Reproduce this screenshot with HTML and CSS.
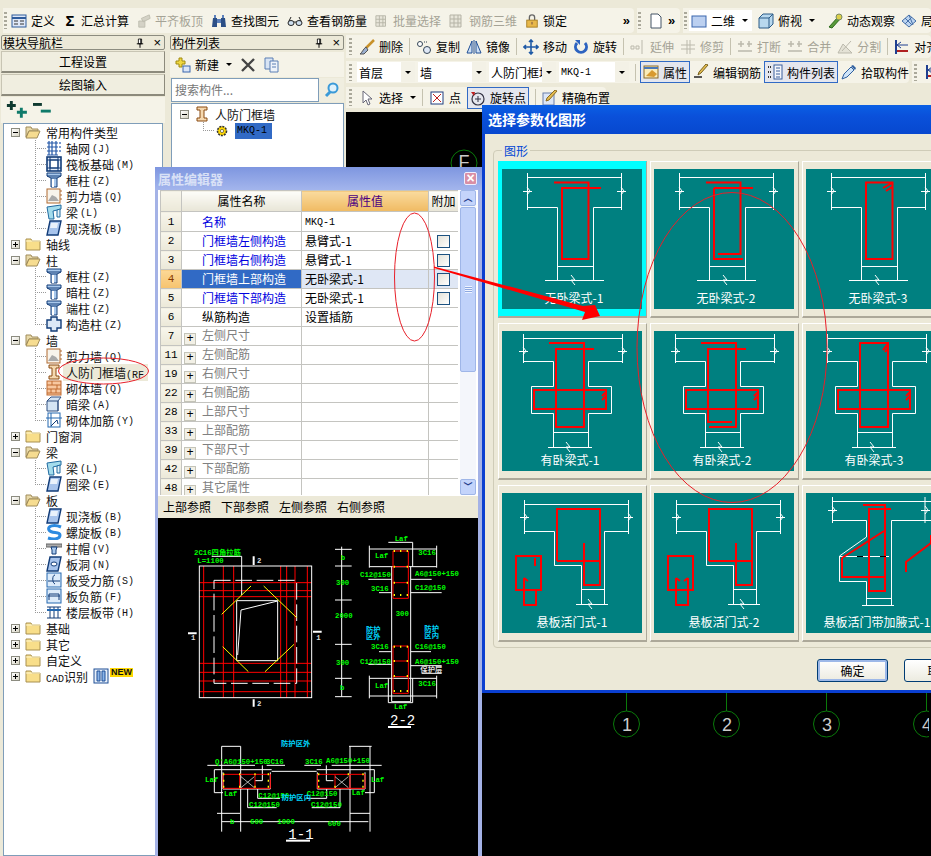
FILE: index.html
```html
<!DOCTYPE html>
<html>
<head>
  <meta charset="utf-8">
  <title>钢筋算量</title>
  <link rel="stylesheet" href="styles.css">
</head>
<body>
<!-- shared icons -->
<svg class="sprite">
  <symbol id="def" viewBox="0 0 16 16"><rect x="1" y="2" width="14" height="12" fill="#dfe8f8" stroke="#2f5c9c"/><path d="M1 5h14" stroke="#2f5c9c" stroke-width="2"/><path d="M3 8h4M3 11h4M9 8h4M9 11h4" stroke="#333"/></symbol>
  <symbol id="pin" viewBox="0 0 10 12"><path d="M3 1h4v6H3z" fill="#fff" stroke="#000"/><path d="M6 1v6M1 7h8M5 7v5" stroke="#000" stroke-width="1.2"/></symbol>
  <symbol id="graya" viewBox="0 0 16 16"><path d="M2 8h7v7H2zM5 5l9-4 1 4-8 4z" fill="#d4d2c6" stroke="#bdbbae"/></symbol>
  <symbol id="find" viewBox="0 0 16 16"><path d="M2 5h4v9H1zM10 5h4l1 9h-5z" fill="#2c4f86"/><path d="M3 2h2v3H3zM11 2h2v3h-2zM6 6h4v4H6z" fill="#5c80bb"/></symbol>
  <symbol id="glass" viewBox="0 0 16 16"><ellipse cx="4" cy="10" rx="3" ry="2.5" fill="#cfe0f0" stroke="#222"/><ellipse cx="12" cy="10" rx="3" ry="2.5" fill="#cfe0f0" stroke="#222"/><path d="M7 9h2M2 8l2-4M14 8l-2-4" stroke="#222" fill="none"/></symbol>
  <symbol id="grayb" viewBox="0 0 16 16"><path d="M1 2h11v12H1zM1 6h11M1 10h11M5 2v12M9 2v12" fill="#e8e6da" stroke="#b5b3a6"/></symbol>
  <symbol id="lock" viewBox="0 0 16 16"><path d="M5 7V4a3 3 0 0 1 6 0v3" fill="none" stroke="#666" stroke-width="1.5"/><rect x="2" y="7" width="12" height="8" fill="#e8b84a" stroke="#a47a1c"/><path d="M8 9v3" stroke="#644"/></symbol>
  <symbol id="page" viewBox="0 0 16 16"><path d="M3 1h7l3 3v11H3z" fill="#fff" stroke="#456"/></symbol>
  <symbol id="v2d" viewBox="0 0 16 16"><rect x="1" y="3" width="14" height="11" fill="#bcd0f0" stroke="#3a66ad"/></symbol>
  <symbol id="v3d" viewBox="0 0 16 16"><path d="M1 5l4-4h10v10l-4 4H1z" fill="#b8d8ee" stroke="#2a5a86"/><path d="M1 5h10v10M11 5l4-4" fill="none" stroke="#2a5a86"/></symbol>
  <symbol id="orbit" viewBox="0 0 16 16"><path d="M2 14l9-10 3 1-9 10z" fill="#5a9a3a" stroke="#2a6a1a"/><circle cx="12" cy="4" r="3" fill="#dcd04a" stroke="#786"/></symbol>
  <symbol id="part" viewBox="0 0 16 16"><path d="M1 8l7-6 7 6-7 6z" fill="#bcd4f0" stroke="#456fa8"/><path d="M4 5l7 7M8 2l4 10M4 11l7-7" stroke="#456fa8"/></symbol>
  <symbol id="del" viewBox="0 0 16 16"><path d="M15 1L7 9" stroke="#c8922a" stroke-width="2.5"/><path d="M7 8l2 3-4 4H1c2-1 3-5 6-7z" fill="#9bb0d0" stroke="#555"/></symbol>
  <symbol id="copy" viewBox="0 0 16 16"><circle cx="4" cy="5" r="2.5" fill="#fff" stroke="#345"/><circle cx="11" cy="11" r="3.5" fill="#dfe8f6" stroke="#345"/><path d="M8 3l4 0" stroke="#345" stroke-dasharray="1 1"/></symbol>
  <symbol id="mirror" viewBox="0 0 16 16"><path d="M1 14L6 2v12zM15 14L10 2v12z" fill="#cfe0f4" stroke="#1f4f96"/><path d="M8 1v14" stroke="#1f4f96"/></symbol>
  <symbol id="move" viewBox="0 0 16 16"><path d="M8 1v14M1 8h14M6 3l2-2 2 2M6 13l2 2 2-2M3 6L1 8l2 2M13 6l2 2-2 2" fill="none" stroke="#1f5aa6" stroke-width="1.6"/></symbol>
  <symbol id="rotate" viewBox="0 0 16 16"><path d="M4 4a5.5 5.5 0 1 0 8 0" fill="none" stroke="#2d63c0" stroke-width="3"/><path d="M2 1h5v5z" fill="#2d63c0"/></symbol>
  <symbol id="ext" viewBox="0 0 16 16"><path d="M1 7h3v3H1zM6 7h3v3H6zM12 1v14" fill="none" stroke="#bbb9ac"/></symbol>
  <symbol id="trim" viewBox="0 0 16 16"><path d="M1 6h14M1 10h14M7 1v14M10 1v14" fill="none" stroke="#bbb9ac"/></symbol>
  <symbol id="brk" viewBox="0 0 16 16"><path d="M1 5h6M10 5h5M1 12h14M4 2v6M12 2v6" fill="none" stroke="#bbb9ac" stroke-width="1.5"/></symbol>
  <symbol id="split" viewBox="0 0 16 16"><path d="M1 14h14L6 5zM14 2L5 12" fill="#e4e2d6" stroke="#bbb9ac"/></symbol>
  <symbol id="align" viewBox="0 0 16 16"><path d="M2 1v14" stroke="#1f3f90" stroke-width="2"/><path d="M3 6h11M7 3L3 6l4 3" fill="none" stroke="#1f3f90"/><path d="M3 12h11" stroke="#b02020" stroke-width="2"/></symbol>
  <symbol id="attr" viewBox="0 0 16 16"><rect x="1" y="2" width="14" height="12" fill="#fbecb8" stroke="#8a6a2a"/><path d="M3 12l6-6 5 4-3 3z" fill="#d89a30"/><path d="M1 4h14" stroke="#4a78b8" stroke-width="2"/></symbol>
  <symbol id="edit" viewBox="0 0 16 16"><path d="M15 1L8 9l-3 2 1-3 7-8z" fill="#e8c050" stroke="#776020"/><path d="M1 13h8" stroke="#222" stroke-width="1.5"/></symbol>
  <symbol id="list" viewBox="0 0 16 16"><rect x="7" y="1" width="8" height="14" fill="#f4f6fb" stroke="#3a5f9c"/><path d="M9 4h4M9 7h4M9 10h4M9 13h4" stroke="#3a5f9c"/><path d="M1 3h3M1 8h3M1 13h3" stroke="#333" stroke-width="2" stroke-dasharray="1 1"/></symbol>
  <symbol id="pick" viewBox="0 0 16 16"><path d="M1 15l2-5 7-7 3 3-7 7z" fill="#cfe4f8" stroke="#2f5f9f"/><path d="M10 2l2-1 3 3-1 2z" fill="#2f5f9f"/></symbol>
  <symbol id="cursor" viewBox="0 0 16 16"><path d="M4 1v12l3-3 2 5 2-1-2-5h4z" fill="#fff" stroke="#667"/></symbol>
  <symbol id="point" viewBox="0 0 16 16"><rect x="2" y="2" width="12" height="12" fill="#fff" stroke="#1f3f80"/><path d="M4 4l8 8M12 4l-8 8" stroke="#c02020"/></symbol>
  <symbol id="rotpt" viewBox="0 0 16 16"><circle cx="8" cy="9" r="6" fill="none" stroke="#334" stroke-width="1.2"/><path d="M8 6v6M5 9h6" stroke="#334"/><path d="M1 2l4 0-1 4z" fill="#c02020"/></symbol>
  <symbol id="exact" viewBox="0 0 16 16"><rect x="1" y="3" width="11" height="12" fill="#dce6f6" stroke="#6a7fa8"/><path d="M15 1L7 10l-3 1 1-3 8-8z" fill="#e4bc50" stroke="#8a6a20"/></symbol>
  <symbol id="newc" viewBox="0 0 16 16"><path d="M1 4h3V1h3v3h3v3H7v3H4V7H1z" fill="#f0d840" stroke="#a08a10"/><rect x="8" y="9" width="7" height="6" fill="#dbe6f7" stroke="#3a66ad"/></symbol>
  <symbol id="xdel" viewBox="0 0 16 16"><path d="M2 2l12 12M14 2L2 14" stroke="#444" stroke-width="2.4"/></symbol>
  <symbol id="docs" viewBox="0 0 16 16"><path d="M1 1h8v11H1z" fill="#d8e4f4" stroke="#5a7fb4"/><path d="M6 4h8v11H6z" fill="#eef3fa" stroke="#5a7fb4"/><path d="M8 7h4M8 10h4" stroke="#5a7fb4"/></symbol>
  <symbol id="srch" viewBox="0 0 16 16"><circle cx="9" cy="6" r="4.5" fill="#dff1fb" stroke="#3a9ad8" stroke-width="2"/><path d="M6 10l-4 4" stroke="#3a9ad8" stroke-width="3"/></symbol>
  <symbol id="plus2" viewBox="0 0 20 18"><path d="M4 1v8M0 5h8" stroke="#0f3a30" stroke-width="2.6"/><path d="M13 7v9M9 11h9" stroke="#0f7a6a" stroke-width="2.6"/></symbol>
  <symbol id="minus2" viewBox="0 0 20 18"><path d="M1 4h8" stroke="#0f3a30" stroke-width="2.6"/><path d="M8 10h9" stroke="#0f7a6a" stroke-width="2.6"/></symbol>
  <symbol id="door" viewBox="0 0 16 16"><path d="M3 1h10v3h-3v8h3v3H3v-3h3V4H3z" fill="#f4d8b0" stroke="#8a4a10"/></symbol>
  <symbol id="starc" viewBox="0 0 16 16"><circle cx="8" cy="8" r="4.5" fill="#ffd800" stroke="#333" stroke-width="1.6" stroke-dasharray="2 1"/><circle cx="8" cy="8" r="1.6" fill="#fff" stroke="#333" stroke-width=".6"/></symbol>

  <symbol id="fopen" viewBox="0 0 16 16"><path d="M1 3h5l1 2h6v2H4L1 13z" fill="#e8d9a8" stroke="#a08c5a"/><path d="M4 7h11l-3 7H1z" fill="#f6dc90" stroke="#a08c5a"/></symbol>
  <symbol id="fold" viewBox="0 0 16 16"><path d="M1 3h5l1 2h8v9H1z" fill="#f8de8a" stroke="#a89050"/><path d="M1 5h14" stroke="#fff6cc"/></symbol>
  <symbol id="grid" viewBox="0 0 16 16"><path d="M1 3h11M1 7h11M1 11h11M1 15h11M3 1v14M6 1v14M10 1v14" fill="none" stroke="#2458a8" stroke-width="1.2"/><path d="M13 2h2v2h-2zM13 6h2v2h-2zM13 10h2v2h-2z" fill="#7a9ad0"/></symbol>
  <symbol id="raft" viewBox="0 0 16 16"><rect x="1" y="1" width="14" height="14" fill="#e4ecf8" stroke="#123c78" stroke-width="1.6"/><rect x="4" y="4" width="8" height="8" fill="#fff" stroke="#123c78"/><path d="M1 4h14M1 12h14M4 1v14M12 1v14" stroke="#123c78"/></symbol>
  <symbol id="col" viewBox="0 0 16 16"><path d="M1 1h14v3l-4 2v9H5V6L1 4z" fill="#a8c8ec" stroke="#123c78"/><path d="M1 4h14M5 6h6" stroke="#123c78"/><path d="M6 7h2v8H6z" fill="#fff"/></symbol>
  <symbol id="shear" viewBox="0 0 16 16"><rect x="1" y="1" width="13" height="14" fill="#f8f4ec" stroke="#b06a30"/><path d="M2 13l4-6 4 2 3 4z" fill="#aaa"/><path d="M14 3h2M14 7h2M14 11h2" stroke="#b06a30"/></symbol>
  <symbol id="beam" viewBox="0 0 16 16"><path d="M1 3l14-2v4L7 7l1 8H3z" fill="#a4dcec" stroke="#1f6aa0"/><path d="M11 6l3-1v8h-3z" fill="#e0f0f8" stroke="#1f6aa0"/></symbol>
  <symbol id="slab" viewBox="0 0 16 16"><path d="M4 1h11l-3 14H1z" fill="#a8c4ec" stroke="#123c78" stroke-width="1.4"/><path d="M5 3h7l-1 5H4z" fill="#eaf2fb"/></symbol>
  <symbol id="constr" viewBox="0 0 16 16"><path d="M5 1h6v3h4v8h-4v3H5v-3H1V4h4z" fill="#dce8f6" stroke="#123c78" stroke-width="1.4"/></symbol>
  <symbol id="brick" viewBox="0 0 16 16"><rect x="1" y="1" width="14" height="14" fill="#f8c8a0" stroke="#c06a30"/><path d="M1 5h14M1 9h14M1 13h14M6 1v4M11 5v4M5 9v4M10 9v4" stroke="#c06a30"/></symbol>
  <symbol id="dbeam" viewBox="0 0 16 16"><path d="M1 5l4-4h10l-3 4v10H1z" fill="#d4e4f4" stroke="#2f4f80"/><path d="M1 5h11v10" fill="none" stroke="#2f4f80"/></symbol>
  <symbol id="wrebar" viewBox="0 0 16 16"><rect x="2" y="1" width="12" height="14" fill="#fff" stroke="#2468b0"/><path d="M0 6h16M5 1v14" stroke="#2468b0"/><path d="M5 14l6-6 1 4" fill="none" stroke="#123c78"/></symbol>
  <symbol id="spiral" viewBox="0 0 16 16"><path d="M15 3C8 0 1 2 3 6s11 1 11 5-6 5-12 3" fill="none" stroke="#2c8ae0" stroke-width="3"/></symbol>
  <symbol id="cap" viewBox="0 0 16 16"><path d="M0 4h16v3H0z" fill="#aaa" stroke="#666"/><path d="M5 7h6l-1 3v4H6v-4z" fill="#a8c8ec" stroke="#123c78"/></symbol>
  <symbol id="hole" viewBox="0 0 16 16"><path d="M4 1h11l-3 14H1z" fill="#a8c4ec" stroke="#123c78" stroke-width="1.4"/><ellipse cx="8" cy="8" rx="3" ry="2" fill="#fff" stroke="#123c78"/></symbol>
  <symbol id="srebar" viewBox="0 0 16 16"><rect x="1" y="1" width="14" height="14" fill="#dcebfa" stroke="#2468b0"/><path d="M2 9h12M9 3c-3 0-3 8 0 9" fill="none" stroke="#123c78"/></symbol>
  <symbol id="nrebar" viewBox="0 0 16 16"><rect x="1" y="1" width="14" height="14" fill="#dcebfa" stroke="#2468b0"/><path d="M3 12V6h10v6M2 8h12" fill="none" stroke="#123c78"/></symbol>
  <symbol id="band" viewBox="0 0 16 16"><path d="M1 3h14M1 14h14M4 3v11M8 3v11M12 3v11" stroke="#123c78"/><path d="M1 6h14" stroke="#2468b0" stroke-width="2"/></symbol>
  <symbol id="cadn" viewBox="0 0 16 16"><rect x="1" y="1" width="14" height="14" fill="#e8f0fa" stroke="#1f4f96"/><path d="M4 3h3v10H4zM9 3h3v10H9z" fill="#8ab4e8" stroke="#1f4f96"/></symbol>

  <g id="base-a" class="w"><path d="M25.5 4V41M119.5 4V41M25 8.5H119M25 38.5H55.5V111M91.5 111V38.5H119M55 97.5H91M43 111.5H102M21 22.5h9M25 18l3 4-3 4M21 22.5h9M115 22.5h9M119 18l3 4-3 4M69 106l4 5-4 0 4 5"/></g>
  <g id="base-b" class="w"><path d="M21.5 3V32M120.5 3V32M21 7.5H120M21 30.5H51.5V55.5H29.5V82.5H51.5V116M86.5 116V82.5H109.5V55.5H86.5V30.5H120M51 101.5H86M46 116.5H90M17 20.5h9M21 16l3 4-3 4M116 20.5h9M120 16l3 4-3 4M64 111l4 5-4 0 4 5"/></g>
  <g id="base-c" class="w"><path d="M22.5 7V41M126.5 7V41M22 11.5H126M22 38.5H52.5V72.5H79.5V111M102.5 111V38.5H126M79 96.5H102M74 111.5H106M18 24.5h9M22 20l3 4-3 4M122 24.5h9M126 20l3 4-3 4M86 106l4 5-4 0 4 5"/></g>
  <path id="cross" d="M32 59H104V78H32ZM104 61l-4 4M104 65l-4 4"/>
</svg>

<div class="app">
  <!-- top toolbar -->
  <div class="top-row">
    <div class="band band-main">
      <span class="grip"></span>
      <span class="tb"><svg class="ic"><use href="#def"/></svg>定义</span>
      <span class="tb"><span class="sigma">Σ</span>汇总计算</span>
      <span class="tb off"><svg class="ic ic14"><use href="#graya"/></svg>平齐板顶</span>
      <span class="tb"><svg class="ic"><use href="#find"/></svg>查找图元</span>
      <span class="tb"><svg class="ic"><use href="#glass"/></svg>查看钢筋量</span>
      <span class="tb off"><svg class="ic ic14"><use href="#grayb"/></svg>批量选择</span>
      <span class="tb off"><svg class="ic"><use href="#grayb"/></svg>钢筋三维</span>
      <span class="tb"><svg class="ic ic14"><use href="#lock"/></svg>锁定</span>
      <span class="more">»</span>
    </div>
    <div class="band band-page">
      <span class="grip"></span>
      <svg class="ic"><use href="#page"/></svg>
      <span class="more">»</span>
    </div>
    <div class="band band-view">
      <span class="grip"></span>
      <span class="tb view2d"><svg class="ic"><use href="#v2d"/></svg>二维<i class="arr"></i></span>
      <span class="tb"><svg class="ic"><use href="#v3d"/></svg>俯视<i class="arr"></i></span>
      <span class="tb tb-orbit"><svg class="ic"><use href="#orbit"/></svg>动态观察</span>
      <span class="tb"><svg class="ic"><use href="#part"/></svg>局部</span>
    </div>
  </div>

  <div class="main">
    <!-- module nav -->
    <div class="nav">
      <div class="ptitle">模块导航栏<span class="pbtns"><svg class="pin"><use href="#pin"/></svg><b>×</b></span></div>
      <div class="navbtn">工程设置</div>
      <div class="navbtn">绘图输入</div>
      <div class="treebar"><svg class="ic20"><use href="#plus2"/></svg><svg class="ic20"><use href="#minus2"/></svg></div>
      <div class="tree">
        <div class="node"><i class="exp minus"></i><svg class="ic"><use href="#fopen"/></svg><span class="lb">常用构件类型</span></div>
        <div class="kids">
          <div class="kid"><i class="conn"></i><svg class="ic"><use href="#grid"/></svg>轴网<span class="m">(J)</span></div>
          <div class="kid"><i class="conn"></i><svg class="ic"><use href="#raft"/></svg>筏板基础<span class="m">(M)</span></div>
          <div class="kid"><i class="conn"></i><svg class="ic"><use href="#col"/></svg>框柱<span class="m">(Z)</span></div>
          <div class="kid"><i class="conn"></i><svg class="ic"><use href="#shear"/></svg>剪力墙<span class="m">(Q)</span></div>
          <div class="kid"><i class="conn"></i><svg class="ic"><use href="#beam"/></svg>梁<span class="m">(L)</span></div>
          <div class="kid"><i class="conn"></i><svg class="ic"><use href="#slab"/></svg>现浇板<span class="m">(B)</span></div>
        </div>
        <div class="node"><i class="exp"></i><svg class="ic"><use href="#fold"/></svg><span class="lb">轴线</span></div>
        <div class="node"><i class="exp minus"></i><svg class="ic"><use href="#fopen"/></svg><span class="lb">柱</span></div>
        <div class="kids">
          <div class="kid"><i class="conn"></i><svg class="ic"><use href="#col"/></svg>框柱<span class="m">(Z)</span></div>
          <div class="kid"><i class="conn"></i><svg class="ic"><use href="#col"/></svg>暗柱<span class="m">(Z)</span></div>
          <div class="kid"><i class="conn"></i><svg class="ic"><use href="#col"/></svg>端柱<span class="m">(Z)</span></div>
          <div class="kid"><i class="conn"></i><svg class="ic"><use href="#constr"/></svg>构造柱<span class="m">(Z)</span></div>
        </div>
        <div class="node"><i class="exp minus"></i><svg class="ic"><use href="#fopen"/></svg><span class="lb">墙</span></div>
        <div class="kids">
          <div class="kid"><i class="conn"></i><svg class="ic"><use href="#shear"/></svg>剪力墙<span class="m">(Q)</span></div>
          <div class="kid"><i class="conn"></i><svg class="ic"><use href="#door"/></svg><span class="hit">人防门框墙<span class="m">(RF</span></span></div>
          <div class="kid"><i class="conn"></i><svg class="ic"><use href="#brick"/></svg>砌体墙<span class="m">(Q)</span></div>
          <div class="kid"><i class="conn"></i><svg class="ic"><use href="#dbeam"/></svg>暗梁<span class="m">(A)</span></div>
          <div class="kid"><i class="conn"></i><svg class="ic"><use href="#wrebar"/></svg>砌体加筋<span class="m">(Y)</span></div>
        </div>
        <div class="node"><i class="exp"></i><svg class="ic"><use href="#fold"/></svg><span class="lb">门窗洞</span></div>
        <div class="node"><i class="exp minus"></i><svg class="ic"><use href="#fopen"/></svg><span class="lb">梁</span></div>
        <div class="kids">
          <div class="kid"><i class="conn"></i><svg class="ic"><use href="#beam"/></svg>梁<span class="m">(L)</span></div>
          <div class="kid"><i class="conn"></i><svg class="ic"><use href="#slab"/></svg>圈梁<span class="m">(E)</span></div>
        </div>
        <div class="node"><i class="exp minus"></i><svg class="ic"><use href="#fopen"/></svg><span class="lb">板</span></div>
        <div class="kids">
          <div class="kid"><i class="conn"></i><svg class="ic"><use href="#slab"/></svg>现浇板<span class="m">(B)</span></div>
          <div class="kid"><i class="conn"></i><svg class="ic"><use href="#spiral"/></svg>螺旋板<span class="m">(B)</span></div>
          <div class="kid"><i class="conn"></i><svg class="ic"><use href="#cap"/></svg>柱帽<span class="m">(V)</span></div>
          <div class="kid"><i class="conn"></i><svg class="ic"><use href="#hole"/></svg>板洞<span class="m">(N)</span></div>
          <div class="kid"><i class="conn"></i><svg class="ic"><use href="#srebar"/></svg>板受力筋<span class="m">(S)</span></div>
          <div class="kid"><i class="conn"></i><svg class="ic"><use href="#nrebar"/></svg>板负筋<span class="m">(F)</span></div>
          <div class="kid"><i class="conn"></i><svg class="ic"><use href="#band"/></svg>楼层板带<span class="m">(H)</span></div>
        </div>
        <div class="node"><i class="exp"></i><svg class="ic"><use href="#fold"/></svg><span class="lb">基础</span></div>
        <div class="node"><i class="exp"></i><svg class="ic"><use href="#fold"/></svg><span class="lb">其它</span></div>
        <div class="node"><i class="exp"></i><svg class="ic"><use href="#fold"/></svg><span class="lb">自定义</span></div>
        <div class="node"><i class="exp"></i><svg class="ic"><use href="#fold"/></svg><span class="lb"><span class="m cad-m">CAD</span>识别</span><svg class="ic cadicon"><use href="#cadn"/></svg><span class="newtag">NEW</span></div>
      </div>
    </div>

    <!-- component list -->
    <div class="comp">
      <div class="ptitle">构件列表<span class="pbtns"><svg class="pin"><use href="#pin"/></svg><b>×</b></span></div>
      <div class="compbar">
        <span class="tb"><svg class="ic"><use href="#newc"/></svg>新建<i class="arr"></i></span>
        <svg class="ic"><use href="#xdel"/></svg>
        <svg class="ic"><use href="#docs"/></svg>
      </div>
      <div class="search"><div class="sbox">搜索构件...</div><div class="sbtn"><svg class="ic"><use href="#srch"/></svg></div></div>
      <div class="ctree">
        <div class="node cnode"><i class="exp minus"></i><svg class="ic"><use href="#door"/></svg><span class="lb">人防门框墙</span></div>
        <div class="kid ckid"><i class="conn"></i><svg class="ic"><use href="#starc"/></svg><span class="sel">MKQ-1</span></div>
      </div>
    </div>

    <!-- work area -->
    <div class="work">
      <div class="band row2">
        <span class="grip"></span>
        <span class="tb"><svg class="ic"><use href="#del"/></svg>删除</span><i class="sep"></i>
        <span class="tb"><svg class="ic"><use href="#copy"/></svg>复制</span>
        <span class="tb"><svg class="ic"><use href="#mirror"/></svg>镜像</span><i class="sep"></i>
        <span class="tb"><svg class="ic"><use href="#move"/></svg>移动</span>
        <span class="tb"><svg class="ic"><use href="#rotate"/></svg>旋转</span><i class="sep"></i>
        <span class="tb off"><svg class="ic"><use href="#ext"/></svg>延伸</span>
        <span class="tb off"><svg class="ic"><use href="#trim"/></svg>修剪</span><i class="sep"></i>
        <span class="tb off"><svg class="ic"><use href="#brk"/></svg>打断</span>
        <span class="tb off"><svg class="ic"><use href="#brk"/></svg>合并</span>
        <span class="tb off"><svg class="ic"><use href="#split"/></svg>分割</span><i class="sep"></i>
        <span class="tb"><svg class="ic"><use href="#align"/></svg>对齐</span>
      </div>
      <div class="row3">
        <div class="band row3-main">
          <span class="grip"></span>
          <span class="combo c1"><span class="ctext">首层</span><i class="arr"></i></span>
          <span class="combo c2"><span class="ctext">墙</span><i class="arr"></i></span>
          <span class="combo c3"><span class="ctext">人防门框墙</span><i class="arr"></i></span>
          <span class="combo c4"><span class="ctext mono">MKQ-1</span><i class="arr"></i></span>
          <i class="sep"></i>
          <span class="tb on"><svg class="ic"><use href="#attr"/></svg>属性</span>
          <span class="tb"><svg class="ic"><use href="#edit"/></svg>编辑钢筋</span>
          <span class="tb on"><svg class="ic"><use href="#list"/></svg>构件列表</span>
          <span class="tb"><svg class="ic"><use href="#pick"/></svg>拾取构件</span>
        </div>
        <div class="band row3-side"><span class="grip"></span><svg class="ic"><use href="#align"/></svg></div>
      </div>
      <div class="band row4">
        <span class="grip"></span>
        <span class="tb"><svg class="ic"><use href="#cursor"/></svg>选择<i class="arr"></i></span><i class="sep"></i>
        <span class="tb"><svg class="ic"><use href="#point"/></svg>点</span>
        <span class="tb on"><svg class="ic"><use href="#rotpt"/></svg>旋转点</span><i class="sep"></i>
        <span class="tb"><svg class="ic"><use href="#exact"/></svg>精确布置</span>
      </div>
      <div class="canvas">
        <svg class="axes" viewBox="348 112 583 744">
          <path class="ax" d="M466 176V190M628.5 693V711M728.5 693V711M828.500 693V711M928.500 693V711"/>
          <circle class="ax" cx="466" cy="163" r="13"/>
          <circle class="ax" cx="628.500" cy="724" r="13"/>
          <circle class="ax" cx="728.500" cy="724" r="13"/>
          <circle class="ax" cx="828.500" cy="724" r="13"/>
          <circle class="ax" cx="928.500" cy="724" r="13"/>
          <text class="axt" x="466" y="168">F</text>
          <text class="axt" x="629" y="731">1</text>
          <text class="axt" x="729" y="731">2</text>
          <text class="axt" x="829" y="731">3</text>
          <text class="axt" x="929" y="731">4</text>
        </svg>
      </div>
    </div>
  </div>

  <!-- property editor, floating window -->
  <div class="editor">
    <div class="etitle">属性编辑器<span class="eclose">×</span></div>
    <div class="egrid">
      <div class="tblwrap">
        <table class="ptable">
          <colgroup><col class="c-no"><col class="c-name"><col class="c-val"><col class="c-add"></colgroup>
          <tr class="head"><th class="no"></th><th>属性名称</th><th class="hval">属性值</th><th>附加</th></tr>
          <tr><td class="no">1</td><td class="nm blue">名称</td><td class="vl"><span class="mono">MKQ-1</span></td><td></td></tr>
          <tr><td class="no">2</td><td class="nm blue">门框墙左侧构造</td><td class="vl">悬臂式-1</td><td><i class="chk"></i></td></tr>
          <tr><td class="no">3</td><td class="nm blue">门框墙右侧构造</td><td class="vl">悬臂式-1</td><td><i class="chk"></i></td></tr>
          <tr class="cur"><td class="no">4</td><td class="nm">门框墙上部构造</td><td class="vl">无卧梁式-1</td><td><i class="chk"></i></td></tr>
          <tr><td class="no">5</td><td class="nm blue">门框墙下部构造</td><td class="vl">无卧梁式-1</td><td><i class="chk"></i></td></tr>
          <tr><td class="no">6</td><td class="nm">纵筋构造</td><td class="vl">设置插筋</td><td></td></tr>
          <tr class="grp"><td class="no">7</td><td class="nm"><i class="pl">+</i>左侧尺寸</td><td></td><td></td></tr>
          <tr class="grp"><td class="no">11</td><td class="nm"><i class="pl">+</i>左侧配筋</td><td></td><td></td></tr>
          <tr class="grp"><td class="no">19</td><td class="nm"><i class="pl">+</i>右侧尺寸</td><td></td><td></td></tr>
          <tr class="grp"><td class="no">22</td><td class="nm"><i class="pl">+</i>右侧配筋</td><td></td><td></td></tr>
          <tr class="grp"><td class="no">28</td><td class="nm"><i class="pl">+</i>上部尺寸</td><td></td><td></td></tr>
          <tr class="grp"><td class="no">33</td><td class="nm"><i class="pl">+</i>上部配筋</td><td></td><td></td></tr>
          <tr class="grp"><td class="no">39</td><td class="nm"><i class="pl">+</i>下部尺寸</td><td></td><td></td></tr>
          <tr class="grp"><td class="no">42</td><td class="nm"><i class="pl">+</i>下部配筋</td><td></td><td></td></tr>
          <tr class="grp"><td class="no">48</td><td class="nm"><i class="pl">+</i>其它属性</td><td></td><td></td></tr>
        </table>
      </div>
      <div class="vscroll">
        <div class="sb-btn">︿</div>
        <div class="sb-thumb"><span></span></div>
        <div class="sb-btn sb-down">﹀</div>
      </div>
    </div>
    <div class="etabs"><span>上部参照</span><span>下部参照</span><span>左侧参照</span><span>右侧参照</span></div>
    <div class="preview">
      <svg class="cad" viewBox="9 9 960 1014">
        <!-- plan -->
        <path class="c-r" d="M133 203H470M133 227H470M133 245H470M133 445H470M133 472H470M133 498H470M133 530H470M146 153V548M205 153V548M236 153V548M377 153V548M395 153V548M420 153V548M457 153V548"/>
        <rect class="c-w" x="133" y="153" width="337" height="395"/>
        <path class="c-w" stroke-dasharray="50 14" d="M177 196H425V505H177Z"/>
        <path class="c-w" d="M245 257H368V437H245ZM258 285L368 258M258 285L248 420M170 124H260V240"/>
        <path class="c-y" d="M288 213L200 298M326 213L425 308M203 395L280 470M417 388L330 470"/>
        <path class="c-wb" d="M296 124V150M296 553V575M99 355H125M474 350H500"/>
        <text class="c-g" x="117" y="120">2C16四角拉筋</text>
        <text class="c-g" x="127" y="144">L=1100</text>
        <text class="c-t" x="306" y="144">2</text>
        <text class="c-t" x="306" y="572">2</text>
        <text class="c-t" x="108" y="374">1</text>
        <text class="c-t" x="484" y="374">1</text>
        <!-- dims -->
        <path class="c-w" d="M560 95V545M540 103H590M540 153H590M540 255H590M540 388H590M540 490H590M540 545H590"/>
        <text class="c-g" x="557" y="135">b</text>
        <text class="c-g" x="543" y="209">300</text>
        <text class="c-g" x="540" y="308">2000</text>
        <text class="c-g" x="543" y="449">300</text>
        <text class="c-g" x="555" y="525">b</text>
        <!-- section 2-2 -->
        <path class="c-w" d="M643 92V158M845 92V158M643 102H845M643 155H845M700 82H773V155M710 155V560H767V155M643 482V550M845 482V550M643 490H845M643 543H845M700 490V563H773V490M640 193H710M767 193H830M672 233H710M767 233H860M672 410H710M767 410H828M640 448H710M767 452H860M800 475H860"/>
        <path class="c-r" d="M714 108H760V250H714ZM714 155H760M714 203H760M714 393H760V535H714ZM714 438H760M714 485H760"/>
        <path class="c-yd" d="M716 108h4M735 108h4M755 108h4M716 155h4M755 155h4M716 203h4M755 203h4M716 240h4M735 240h4M755 240h4M716 395h4M735 395h4M755 395h4M716 438h4M755 438h4M716 483h4M755 483h4M716 528h4M735 528h4M755 528h4"/>
        <text class="c-g" x="719" y="77">Laf</text>
        <text class="c-g" x="660" y="128">Laf</text>
        <text class="c-g" x="790" y="119">3C16</text>
        <text class="c-g" x="615" y="187">C12@150</text>
        <text class="c-g" x="780" y="184">A6@150+150</text>
        <text class="c-g" x="648" y="227">3C16</text>
        <text class="c-g" x="780" y="226">C12@150</text>
        <text class="c-g" x="722" y="302">300</text>
        <text class="c-c" x="633" y="350">防护</text>
        <text class="c-c" x="633" y="372">区外</text>
        <text class="c-c" x="808" y="347">防护</text>
        <text class="c-c" x="808" y="370">区内</text>
        <text class="c-g" x="648" y="403">3C16</text>
        <text class="c-g" x="780" y="403">C16@150</text>
        <text class="c-g" x="615" y="446">C12@150</text>
        <text class="c-g" x="780" y="448">A6@150+150</text>
        <text class="c-t" x="796" y="472">保护层</text>
        <text class="c-g" x="660" y="518">Laf</text>
        <text class="c-g" x="790" y="514">3C16</text>
        <text class="c-g" x="717" y="581">Laf</text>
        <text class="c-big" x="705" y="630">2-2</text>
        <path class="c-wb" d="M699 636H768"/>
        <!-- section 1-1 -->
        <path class="c-w" d="M157 751H300M335 751H390M448 751H498M530 751H680M200 694H257M582 694H650M200 694V950M257 694V950M585 694V950M645 694V950M178 764H350M350 769H485M485 764H658M178 764V833H204M658 764V833H630M204 772V822H346V772M487 772V822H630V772M322 751V797H300M514 751V797H535M278 822V878H365M555 822V878H470M308 822V850H375M515 822V850H455M186 895H255M585 895H645M200 920H640"/>
        <path class="c-r" d="M204 778H346V820H204ZM487 778H630V820H487ZM254 778V820M300 778V820M540 778V820M585 778V820"/>
        <path class="c-wt" d="M258 785L298 818M298 785L258 818M540 785L580 818M580 785L540 818"/>
        <path class="c-yd" d="M204 778h4M204 797h4M204 815h4M252 778h4M298 778h4M252 815h4M298 815h4M338 778h4M338 797h4M338 815h4M489 778h4M489 797h4M489 815h4M538 815h4M578 778h4M622 778h4M622 797h4M622 815h4"/>
        <text class="c-c" x="378" y="693">防护区外</text>
        <text class="c-g" x="180" y="746">Q'A6@150+150</text>
        <text class="c-g" x="333" y="746">3C16</text>
        <text class="c-g" x="450" y="746">3C16</text>
        <text class="c-g" x="513" y="743">A6@150+150</text>
        <text class="c-g" x="150" y="802">Laf</text>
        <text class="c-g" x="648" y="802">Laf</text>
        <text class="c-g" x="207" y="842">Laf</text>
        <text class="c-g" x="590" y="841">Laf</text>
        <text class="c-g" x="310" y="848">C12@150</text>
        <text class="c-g" x="455" y="844">C12@150</text>
        <text class="c-c" x="380" y="855">防护区内</text>
        <text class="c-g" x="282" y="875">C12@150</text>
        <text class="c-g" x="468" y="875">C12@150</text>
        <text class="c-g" x="225" y="928">b</text>
        <text class="c-g" x="285" y="928">600</text>
        <text class="c-g" x="367" y="928">1000</text>
        <text class="c-g" x="518" y="932">600</text>
        <text class="c-big" x="400" y="972">1-1</text>
        <path class="c-wb" d="M393 977H465"/>
      </svg>
    </div>
  </div>

  <!-- parametric shape dialog -->
  <div class="dialog">
    <div class="dtitle">选择参数化图形</div>
    <div class="dbody">
      <div class="group">
        <div class="gtitle">图形</div>
        <div class="shapes">
          <div class="cell active"><svg class="fig" viewBox="0 0 140 140"><use href="#base-a"/><path class="r" d="M52 13.500H86.500V90H60V19H99"/><text class="lbl" x="72" y="134">无卧梁式-1</text></svg></div>
          <div class="cell"><svg class="fig" viewBox="0 0 140 140"><use href="#base-a"/><path class="r" d="M52 13.500H86.500V85H64M60 19H99M60 19V90H89"/><text class="lbl" x="72" y="134">无卧梁式-2</text></svg></div>
          <div class="cell"><svg class="fig" viewBox="0 0 140 140"><use href="#base-a"/><path class="r" d="M60 13.500H86.500V90H60ZM86 14l-9 5M86 18l-6 4"/><text class="lbl" x="72" y="134">无卧梁式-3</text></svg></div>

          <div class="cell"><svg class="fig" viewBox="0 0 140 140"><use href="#base-b"/><path class="r" d="M47 12H82V96H54V18H92"/><use class="r" href="#cross"/><text class="lbl" x="68" y="134">有卧梁式-1</text></svg></div>
          <div class="cell"><svg class="fig" viewBox="0 0 140 140"><use href="#base-b"/><path class="r" d="M47 12H82V96H55M78 91H54V18H92"/><use class="r" href="#cross"/><text class="lbl" x="68" y="134">有卧梁式-2</text></svg></div>
          <div class="cell"><svg class="fig" viewBox="0 0 140 140"><use href="#base-b"/><path class="r" d="M54 12H82V96H54ZM82 13l-5 6M82 17l-3 4"/><use class="r" href="#cross"/><text class="lbl" x="68" y="134">有卧梁式-3</text></svg></div>

          <div class="cell"><svg class="fig" viewBox="0 0 140 140"><use href="#base-c"/><path class="r" d="M55 68V16H98V92H82V50M55 68H98M14 63H39V97H14ZM33 65v8M22 85V112H34V97M22 85l4 3"/><text class="lbl" x="70" y="134">悬板活门式-1</text></svg></div>
          <div class="cell"><svg class="fig" viewBox="0 0 140 140"><use href="#base-c"/><path class="r" d="M55 68V16H98V92H82V50M55 68H98M14 63H39V97H14ZM22 85V112H34V85M22 85l4 3M34 85l-4 3"/><text class="lbl" x="70" y="134">悬板活门式-2</text></svg></div>
          <div class="cell"><svg class="fig" viewBox="0 0 140 140"><path class="w" d="M26.500 4V30M26 8.500H135M26 27.500H60.500V44L33.500 63V88.500H60.500V112M85.500 112V27.500H135M34 63.500H83M60 105.500H85M56 112.500H88M22 17.500h9M26 13l3 4-3 4M119 4V30M115 17.500h9M119 13l3 4-3 4"/><path class="r" d="M57 12H79V98H63V16H85M36 65L78 38M36 65V84H79M100 79V69L125 50V42"/><path class="kd" d="M51 63.500h6M74 63.500h6"/><text class="lbl" x="71" y="134">悬板活门带加腋式-1</text></svg></div>
        </div>
      </div>
      <div class="dbtns"><span class="dbtn focus">确定</span><span class="dbtn">取消</span></div>
    </div>
  </div>

  <!-- hand drawn marks on the shot -->
  <svg class="marks" viewBox="0 0 931 856">
    <ellipse class="mk" cx="103.5" cy="371" rx="45" ry="13"/>
    <ellipse class="mk" cx="414.5" cy="277" rx="20" ry="64"/>
    <ellipse class="mk" cx="732" cy="347.5" rx="95" ry="155"/>
    <path class="mk-arrow" d="M434 266.500L583 306L595 305L600 316L582 320L585 312L434 268Z"/>
  </svg>
</div>
</body>
</html>
```

FILE: styles.css
```css
* {
  box-sizing: border-box;
}
body {
  margin: 0;
  background: #ece9d8;
  font-family: "Noto Sans CJK SC", "Liberation Sans", sans-serif;
  font-size: 12px;
  color: #000;
}
.sprite {
  position: absolute;
  width: 0;
  height: 0;
}
.app {
  position: relative;
  display: flex;
  flex-direction: column;
  width: 931px;
  height: 856px;
  padding-top: 8px;
  overflow: hidden;
  background: #ece9d8;
}
.m, .mono {
  font-family: "Liberation Mono", monospace;
  font-size: 10px;
}
.m {
  margin: 2px 0 0 2px;
}
.hit .m, .cad-m {
  margin: 0;
}

/* toolbars */
.top-row {
  display: flex;
  gap: 3px;
  height: 27px;
  flex-shrink: 0;
}
.band {
  display: flex;
  align-items: center;
  gap: 8px;
  height: 25px;
  background: #f5f3e8;
  border-radius: 0 4px 4px 0;
  white-space: nowrap;
}
.band-main {
  width: 631px;
  margin-left: 3px;
  padding-left: 1px;
}
.band-page {
  width: 43px;
  gap: 4px;
  padding-left: 1px;
}
.band-view {
  flex: 1;
  gap: 6px;
  overflow: hidden;
  padding-left: 1px;
}
.grip {
  flex-shrink: 0;
  width: 3px;
  height: 17px;
  margin-right: -4px;
  background: repeating-linear-gradient(#aaa89a 0 2px, transparent 2px 4px);
}
.band-page .grip {
  margin-right: 3px;
}
.band-view .grip {
  margin-right: -4px;
}
.tb {
  display: inline-flex;
  align-items: center;
  gap: 4px;
  height: 22px;
  flex-shrink: 0;
}
.tb.off {
  color: #a5a396;
}
.tb.on {
  padding: 0 2px;
  border: 1px solid #316ac5;
  background: #e4e6ee;
}
.ic {
  width: 16px;
  height: 16px;
  flex-shrink: 0;
}
.ic14 {
  width: 14px;
}
.ic20 {
  width: 24px;
  height: 20px;
}
.sigma {
  width: 14px;
  font-family: "Liberation Sans", sans-serif;
  font-size: 15px;
  font-weight: bold;
  text-align: center;
}
.more {
  margin-left: auto;
  margin-right: 4px;
  font-family: "Liberation Sans", sans-serif;
  font-weight: bold;
  font-size: 13px;
}
.band-page .more {
  margin-left: 0;
  margin-right: 0;
}
.arr {
  display: inline-block;
  width: 0;
  height: 0;
  margin-left: 3px;
  border: 3px solid transparent;
  border-top: 3px solid #000;
  border-bottom: 0;
}
.view2d {
  height: 21px;
  padding: 0 4px 0 2px;
  background: #fff;
}
.tb-orbit {
  margin-left: 6px;
}
.sep {
  flex-shrink: 0;
  width: 1px;
  height: 17px;
  background: #c5c2b0;
}

/* panels */
.main {
  display: flex;
  flex: 1;
  min-height: 0;
}
.ptitle {
  display: flex;
  justify-content: space-between;
  align-items: center;
  height: 15px;
  padding-left: 1px;
  border: 1px solid #8c8c80;
  border-radius: 2px;
  background: #ece9d8;
  line-height: 13px;
}
.pbtns {
  display: flex;
  align-items: center;
  gap: 9px;
  padding-right: 3px;
  font-weight: normal;
}
.pbtns b {
  font-family: "Liberation Sans", sans-serif;
  font-size: 13px;
  font-weight: normal;
}
.pin {
  width: 8px;
  height: 10px;
}
.nav {
  display: flex;
  flex-direction: column;
  width: 164px;
  margin-left: 1px;
}
.navbtn {
  height: 22px;
  margin-top: 1px;
  border: 1px solid #c8c5b4;
  border-right-color: #8c8a7c;
  border-bottom: 2px solid #8c8a7c;
  background: #f0eee0;
  line-height: 19px;
  text-align: center;
}
.treebar {
  display: flex;
  align-items: center;
  gap: 1px;
  height: 26px;
  margin-top: 1px;
  padding-left: 5px;
  background: #f5f3e8;
}
.tree {
  flex: 1;
  margin: 0 2px;
  border: 1px solid #7f9db9;
  background: #fff;
}
.node, .kid {
  display: flex;
  align-items: center;
  height: 16px;
  white-space: nowrap;
  color: #111;
}
.node {
  padding-left: 7px;
}
.node .ic {
  margin-left: 5px;
}
.node .lb {
  margin-left: 5px;
}
.exp {
  position: relative;
  flex-shrink: 0;
  width: 9px;
  height: 9px;
  border: 1px solid #8c8c80;
  background: linear-gradient(135deg, #fff, #d8d5c4);
}
.exp::before {
  content: "";
  position: absolute;
  left: 1px;
  top: 3px;
  width: 5px;
  height: 1px;
  background: #000;
}
.exp:not(.minus)::after {
  content: "";
  position: absolute;
  left: 3px;
  top: 1px;
  width: 1px;
  height: 5px;
  background: #000;
}
.kids {
  padding-left: 31px;
}
.kid .ic {
  margin-right: 4px;
}
.conn {
  flex-shrink: 0;
  width: 11px;
  height: 16px;
  background:
    repeating-linear-gradient(to right, #999 0 1px, transparent 1px 2px) 0 8px / 11px 1px no-repeat,
    repeating-linear-gradient(#999 0 1px, transparent 1px 2px) 0 0 / 1px 100% no-repeat;
}
.kid:last-child .conn {
  background-size: 11px 1px, 1px 9px;
}
.hit {
  margin-left: -3px;
  padding: 0 4px 0 3px;
  background: #ece9d8;
}
.cadicon {
  margin-left: 6px;
}
.newtag {
  align-self: flex-start;
  margin-left: 1px;
  padding: 0 1px;
  background: #ffd800;
  font-family: "Liberation Sans", sans-serif;
  font-size: 9px;
  font-weight: bold;
  line-height: 9px;
}
.comp {
  display: flex;
  flex-direction: column;
  width: 174px;
  margin-left: 5px;
}
.compbar {
  display: flex;
  align-items: center;
  gap: 8px;
  height: 25px;
  margin-top: 2px;
  padding-left: 5px;
  background: #f5f3e8;
}
.search {
  display: flex;
  height: 24px;
  margin-top: 1px;
}
.sbox {
  width: 148px;
  margin-left: 1px;
  padding-left: 3px;
  border: 1px solid #7f9db9;
  background: #fff;
  color: #777;
  font-size: 12px;
  line-height: 21px;
}
.sbtn {
  flex: 1;
  display: flex;
  align-items: center;
  justify-content: center;
  background: #f0eee0;
}
.ctree {
  flex: 1;
  margin-top: 1px;
  margin-left: 1px;
  padding-top: 2px;
  border: 1px solid #7f9db9;
  background: #fff;
}
.cnode {
  padding-left: 8px;
}
.ckid {
  height: 18px;
  padding-left: 31px;
}
.ckid .ic {
  margin-right: 5px;
}
.ckid .conn {
  height: 18px;
  background-size: 11px 1px, 1px 9px;
}
.sel {
  width: 37px;
  height: 16px;
  padding-left: 2px;
  background: #316ac5;
  color: #000;
  font-family: "Liberation Mono", monospace;
  font-size: 10px;
  line-height: 16px;
}
.work {
  display: flex;
  flex-direction: column;
  flex: 1;
  margin-left: 2px;
  min-width: 0;
}
.row2 {
  flex-shrink: 0;
  height: 23px;
  gap: 6px;
  margin-bottom: 3px;
  padding-left: 3px;
  overflow: hidden;
}
.row2 .grip {
  margin-right: 1px;
}
.row3 {
  display: flex;
  flex-shrink: 0;
  gap: 3px;
  height: 22px;
  margin-bottom: 4px;
}
.row3-main {
  width: 568px;
  height: 22px;
  gap: 3px;
  padding-left: 3px;
}
.row3-main .grip {
  margin-right: 2px;
}
.row3-main .sep {
  margin: 0 1px 0 3px;
}
.row3-side {
  flex: 1;
  height: 22px;
  padding-left: 2px;
}
.row3-side .grip {
  margin-right: 0;
}
.combo {
  display: inline-flex;
  align-items: center;
  flex-shrink: 0;
  height: 20px;
  background: #fff;
}
.ctext {
  flex: 1;
  min-width: 0;
  padding-left: 2px;
  overflow: hidden;
  white-space: nowrap;
}
.combo .arr {
  flex-shrink: 0;
  width: 14px;
  height: 100%;
  margin: 0;
  border: 0;
  background: #f3f1e6;
  position: relative;
}
.combo .arr::after {
  content: "";
  position: absolute;
  left: 4px;
  top: 9px;
  border: 3px solid transparent;
  border-top-color: #000;
  border-bottom: 0;
}
.c1 { width: 58px; }
.c2 { width: 68px; }
.c3 { width: 67px; }
.c4 { width: 70px; }
.row4 {
  flex-shrink: 0;
  width: 260px;
  height: 21px;
  gap: 6px;
  margin-bottom: 4px;
  padding-left: 3px;
}
.row4 .grip {
  margin-right: 1px;
}
.canvas {
  position: relative;
  flex: 1;
  background: #000;
}
.axes {
  position: absolute;
  left: 0;
  top: 0;
  width: 583px;
  height: 744px;
}
.ax {
  fill: none;
  stroke: #0a7a0a;
}
.axt {
  fill: #ccc;
  font-family: "Liberation Sans", sans-serif;
  font-size: 18px;
  text-anchor: middle;
}

/* property editor */
.editor {
  position: absolute;
  left: 155px;
  top: 167px;
  display: flex;
  flex-direction: column;
  width: 327px;
  height: 689px;
  border: solid #a4b2e6;
  border-width: 0 4px 0 3px;
  background: #ece9d8;
}
.etitle {
  display: flex;
  align-items: center;
  justify-content: space-between;
  height: 23px;
  margin: 0 -4px 0 -3px;
  padding: 0 5px 0 3px;
  background: linear-gradient(#7e96e0, #a3b5ec);
  color: #d9e1f6;
  font-size: 13px;
  font-weight: bold;
}
.eclose {
  width: 13px;
  height: 13px;
  border: 1px solid #eef;
  border-radius: 2px;
  background: #d98fa5;
  color: #fff;
  font-family: "Liberation Sans", sans-serif;
  font-size: 14px;
  font-weight: bold;
  line-height: 10px;
  text-align: center;
}
.egrid {
  display: flex;
  gap: 2px;
  height: 305px;
  padding-left: 2px;
  background: #fff;
}
.tblwrap {
  width: 298px;
  height: 305px;
  overflow: hidden;
}
.ptable {
  width: 298px;
  table-layout: fixed;
  border-collapse: collapse;
}
.c-no { width: 21px; }
.c-name { width: 120px; }
.c-val { width: 127px; }
.c-add { width: 30px; }
.ptable th, .ptable td {
  height: 19px;
  padding: 0;
  border: 1px solid #c4c4c0;
  overflow: hidden;
  white-space: nowrap;
  line-height: 16px;
}
.ptable th {
  height: 21px;
  background: linear-gradient(#fdfdfa, #e8e5d6);
  font-weight: normal;
}
.ptable .hval {
  background: linear-gradient(#fadb9e, #f0ba62);
  color: #4b0082;
}
.ptable .no {
  background: linear-gradient(#f8f6ec, #ebe8d8);
  font-family: "Liberation Mono", monospace;
  font-size: 11px;
  text-align: center;
}
.ptable .nm {
  padding-left: 20px;
}
.ptable .vl {
  padding-left: 3px;
}
.blue {
  color: #0000e0;
}
.cur .nm {
  background: #316ac5;
  color: #fff;
}
.ptable .cur .no {
  background: linear-gradient(#fcd896, #f6c36e);
  color: #8a3b00;
}
.cur .vl, .cur td:last-child {
  background: #dfe7f5;
}
.chk {
  display: block;
  width: 13px;
  height: 13px;
  margin: 0 auto;
  border: 1px solid #1c5180;
  background: linear-gradient(135deg, #e4e2d8, #fff);
}
.grp .nm {
  padding-left: 2px;
  color: #808080;
}
.pl {
  display: inline-block;
  width: 12px;
  height: 12px;
  margin-right: 6px;
  border: 1px solid #c4c4b8;
  background: #f2f0e6;
  color: #000;
  font-family: "Liberation Mono", monospace;
  font-size: 12px;
  font-style: normal;
  line-height: 10px;
  text-align: center;
  vertical-align: -2px;
}
.vscroll {
  display: flex;
  flex-direction: column;
  width: 16px;
  background: #f4f6fb;
}
.sb-btn {
  height: 16px;
  border: 1px solid #9fb6e8;
  border-radius: 2px;
  background: #c4d4fb;
  color: #26408c;
  font-size: 9px;
  font-weight: bold;
  line-height: 14px;
  text-align: center;
}
.sb-thumb {
  display: flex;
  align-items: center;
  justify-content: center;
  height: 165px;
  margin-top: 1px;
  border: 1px solid #9fb6e8;
  border-radius: 2px;
  background: #c0d2fa;
}
.sb-thumb span {
  width: 7px;
  height: 7px;
  background: repeating-linear-gradient(#eef3ff 0 1px, #8da8e0 1px 2px);
}
.sb-down {
  margin-top: auto;
}
.etabs {
  display: flex;
  gap: 10px;
  flex-shrink: 0;
  height: 23px;
  padding-left: 5px;
  background: #ece9d8;
  border-top: 1px solid #fff;
  line-height: 21px;
}
.preview {
  flex: 1;
  min-height: 0;
  background: #000;
  overflow: hidden;
}
.cad {
  display: block;
  width: 320px;
  height: 338px;
}
.cad path, .cad rect {
  fill: none;
}
.c-w { stroke: #fff; stroke-width: 3; }
.c-wt { stroke: #fff; stroke-width: 2; }
.c-wb { stroke: #fff; stroke-width: 6; }
.c-r { stroke: #f00; stroke-width: 3; }
.c-y { stroke: #ff0; stroke-width: 3; }
.c-yd { stroke: #ff0; stroke-width: 6; }
.cad text {
  font-family: "Liberation Mono", "Noto Sans CJK SC", monospace;
  font-size: 22px;
  font-weight: bold;
}
.cad .c-g { fill: #0f0; }
.cad .c-c { fill: #00d8ff; }
.cad .c-t { fill: #ddd; }
.cad .c-big {
  fill: #fff;
  font-size: 42px;
  font-weight: normal;
}

/* dialog */
.dialog {
  position: absolute;
  left: 482px;
  top: 105px;
  width: 620px;
  height: 588px;
  border: solid #0a3fd0;
  border-width: 0 3px 3px;
  border-radius: 4px 4px 0 0;
  background: #ece9d8;
}
.dtitle {
  height: 29px;
  margin: 0 -3px;
  padding-left: 6px;
  background: linear-gradient(#0a5fe4, #0a50da 40%, #0748cf);
  color: #fff;
  font-size: 14px;
  font-weight: bold;
  line-height: 29px;
}
.dbody {
  padding: 16px 0 0 8px;
}
.group {
  padding: 0 0 5px 4px;
  border: 1px solid #cfccb8;
  border-radius: 4px;
}
.gtitle {
  width: fit-content;
  margin: -9px 0 0 4px;
  padding: 0 2px;
  background: #ece9d8;
  color: #0046d5;
  line-height: 17px;
}
.shapes {
  display: grid;
  grid-template-columns: repeat(3, 149px);
  gap: 5px 3px;
  margin-top: 2px;
}
.cell {
  height: 157px;
  padding: 8px 0 0 4px;
  border: 1px solid;
  border-color: #fff #aca899 #aca899 #fff;
  border-width: 1px 1px 2px 1px;
}
.cell.active {
  background: #0ff;
  border-color: #0ff #aca899 #aca899 #0ff;
}
.fig {
  display: block;
  width: 140px;
  height: 140px;
  margin: -1px 0 0 -1px;
  background: #008080;
}
.w {
  fill: none;
  stroke: #fff;
  stroke-width: 1;
}
.r {
  fill: none;
  stroke: #f00;
  stroke-width: 2;
}
.kd {
  stroke: #000;
  fill: none;
}
.lbl {
  fill: #fff;
  font-size: 12px;
  text-anchor: middle;
}
.dbtns {
  display: flex;
  gap: 16px;
  margin: 11px 0 0 324px;
}
.dbtn {
  width: 71px;
  height: 23px;
  border: 1px solid #003c74;
  border-radius: 3px;
  background: linear-gradient(#fff, #ecebe0);
  line-height: 21px;
  text-align: center;
}
.dbtn.focus {
  box-shadow: inset 0 0 0 2px #9db8e8;
}

/* annotation marks */
.marks {
  position: absolute;
  left: 0;
  top: 0;
  width: 931px;
  height: 856px;
  pointer-events: none;
}
.mk {
  fill: none;
  stroke: #e8202a;
  stroke-width: 1;
}
.mk-arrow {
  fill: #f00;
}
```
